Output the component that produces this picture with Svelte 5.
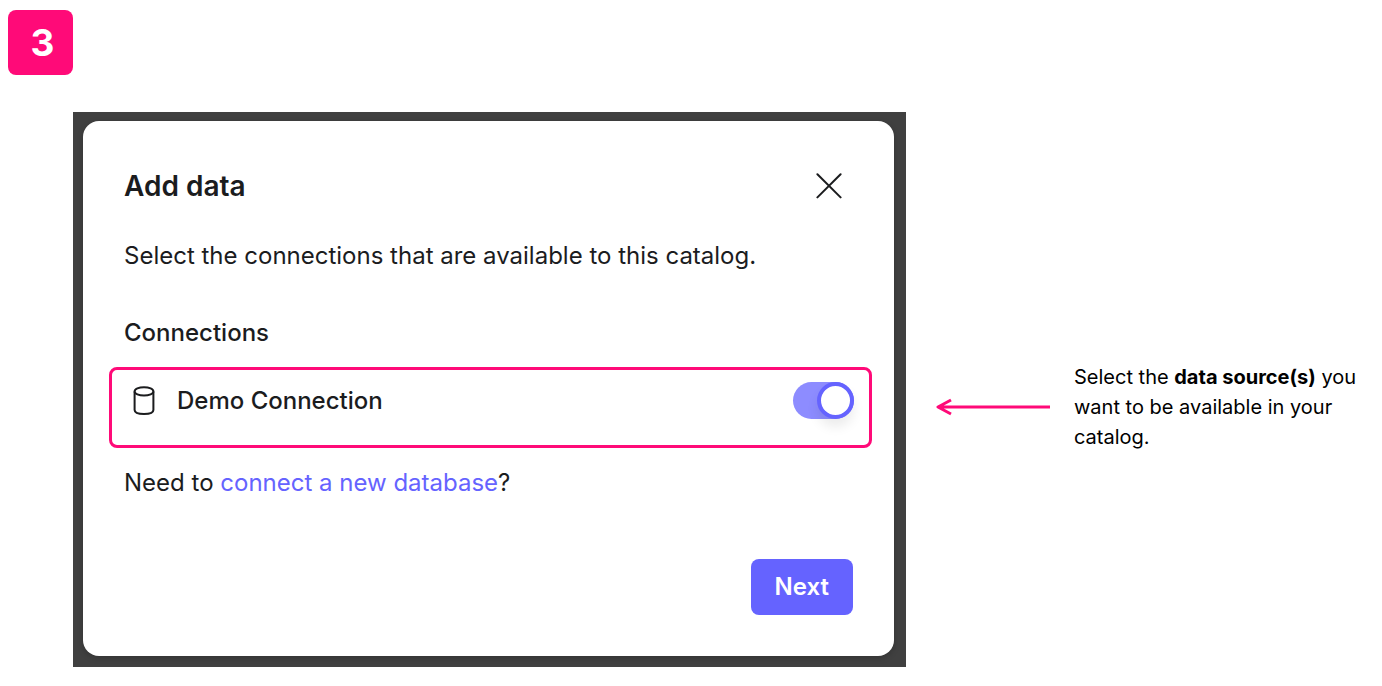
<script lang="ts">
  interface Connection {
    id: string;
    name: string;
    enabled: boolean;
  }

  let connections = $state<Connection[]>([
    { id: 'demo', name: 'Demo Connection', enabled: true },
  ]);
  let open = $state(true);
</script>

<main class="guide">
  <div class="step">3</div>

  <div class="step-body">
    <div class="backdrop">
      {#if open}
        <div class="modal" role="dialog" aria-labelledby="modal-title">
          <!-- Header -->
          <div class="modal-header">
            <h2 id="modal-title" class="modal-title">Add data</h2>
            <button class="btn-close" onclick={() => (open = false)} aria-label="Close">
              <svg width="26" height="26" viewBox="0 0 26 26" fill="none" aria-hidden="true">
                <path d="M1.4 1.2L24.6 24.4M24.6 1.2L1.4 24.4" stroke="currentColor" stroke-width="2" stroke-linecap="round" />
              </svg>
            </button>
          </div>

          <p class="intro">Select the connections that are available to this catalog.</p>

          <!-- Connections -->
          <h3 class="section-label">Connections</h3>
          <div class="connections">
            {#each connections as connection (connection.id)}
              <div class="connection">
                <svg width="22" height="30" viewBox="0 0 22 30" fill="none" aria-hidden="true">
                  <ellipse cx="11" cy="5.4" rx="9.4" ry="4.2" stroke="currentColor" stroke-width="2" />
                  <path d="M1.6 5.4V24C1.6 26.6 5.8 28 11 28S20.4 26.6 20.4 24V5.4" stroke="currentColor" stroke-width="2" />
                </svg>
                <label class="connection-name" for={connection.id}>{connection.name}</label>
                <input
                  id={connection.id}
                  class="toggle"
                  type="checkbox"
                  role="switch"
                  bind:checked={connection.enabled}
                />
              </div>
            {/each}
          </div>

          <p class="new-database">Need to <a href="#connect">connect a new database</a>?</p>

          <!-- Footer -->
          <div class="modal-footer">
            <button class="btn-primary">Next</button>
          </div>
        </div>
      {/if}
    </div>

    <svg class="arrow" width="116" height="20" viewBox="0 0 116 20" fill="none" aria-hidden="true">
      <path d="M115 10H3M16 3L3 10L16 17" stroke="currentColor" stroke-width="3" stroke-linecap="butt" stroke-linejoin="round" />
    </svg>

    <p class="note">Select the <strong>data source(s)</strong> you want to be available in your catalog.</p>
  </div>
</main>

<style>
  :global(body) {
    background: #fff;
  }

  .guide {
    --pink: #ff0a78;
    --violet: #6563ff;
    --ink: #1b1c1e;

    box-sizing: border-box;
    padding: 10px 8px 19px;
    font-family: Inter, 'Liberation Sans', sans-serif;
    color: #000;
  }

  h2,
  h3,
  p {
    margin: 0;
  }

  .step {
    width: 65px;
    line-height: 65px;
    padding-left: 4px;
    box-sizing: border-box;
    border-radius: 8px;
    background: var(--pink);
    color: #fff;
    font-size: 37px;
    font-weight: 700;
    text-align: center;
  }

  .step-body {
    display: grid;
    grid-template-columns: minmax(0, 1fr) 116px 323px;
    align-items: center;
    margin: 37px 0 0 65px;
  }

  /* ---- Modal ---- */
  .backdrop {
    margin-right: 29px;
    padding: 9px 12px 11px 10px;
    background: #404040;
  }

  .modal {
    padding: 41px;
    border-radius: 16px;
    background: #fff;
    color: var(--ink);
    font-size: 24px;
    line-height: 36px;
    box-shadow: 0 2px 6px rgba(0, 0, 0, 0.2);
  }

  .modal-header {
    display: flex;
    align-items: center;
    justify-content: space-between;
    height: 48px;
  }

  .modal-title {
    font-size: 28px;
    font-weight: 600;
  }

  .btn-close {
    display: grid;
    place-items: center;
    width: 48px;
    height: 48px;
    padding: 0;
    border: 0;
    background: none;
    color: inherit;
    cursor: pointer;
  }

  .intro {
    margin-top: 28px;
  }

  .section-label {
    margin-top: 41px;
    font-size: 24px;
    font-weight: 500;
  }

  .connections {
    margin: 16px -19px 0 -15px;
    padding: 12px 15px 26px 21px;
    border: 3px solid var(--pink);
    border-radius: 8px;
  }

  .connection {
    display: flex;
    align-items: center;
    height: 37px;
  }

  .connection-name {
    flex: 1;
    margin-left: 22px;
    font-weight: 500;
  }

  .toggle {
    appearance: none;
    width: 61px;
    height: 37px;
    margin: 0;
    border-radius: 19px;
    background: #c4c4cc;
    cursor: pointer;
  }

  .toggle::before {
    content: '';
    display: block;
    box-sizing: border-box;
    width: 37px;
    height: 37px;
    border: 4px solid #8a8a94;
    border-radius: 50%;
    background: #fff;
    box-shadow: 0 8px 12px rgba(0, 0, 0, 0.08);
  }

  .toggle:checked {
    background: #8d8cff;
  }

  .toggle:checked::before {
    margin-left: auto;
    border-color: var(--violet);
  }

  .new-database {
    margin-top: 17px;
  }

  .new-database a {
    color: var(--violet);
    text-decoration: none;
  }

  .modal-footer {
    display: flex;
    justify-content: flex-end;
    margin-top: 58px;
  }

  .btn-primary {
    height: 56px;
    padding: 0 24px;
    border: 0;
    border-radius: 8px;
    background: var(--violet);
    color: #fff;
    font: inherit;
    font-weight: 600;
    cursor: pointer;
  }

  /* ---- Annotation ---- */
  .arrow {
    margin-top: 35px;
    color: var(--pink);
  }

  .note {
    margin-top: 35px;
    padding-left: 23px;
    font-size: 20px;
    line-height: 30px;
  }

  .note strong {
    font-weight: 700;
  }
</style>
